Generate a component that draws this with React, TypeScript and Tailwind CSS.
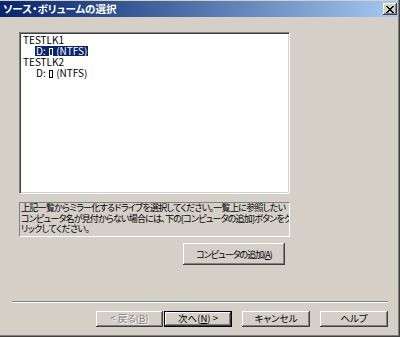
import React from "react";

const font = "font-['Noto_Sans_CJK_JP','Noto_Sans_CJK_SC',sans-serif] [font-feature-settings:'palt']";

function Btn({
  children,
  className = "",
  variant = "normal",
}: {
  children: React.ReactNode;
  className?: string;
  variant?: "normal" | "default" | "disabled";
}) {
  const frame =
    variant === "default"
      ? "border border-black shadow-[inset_-1px_-1px_#404040,inset_1px_1px_#ffffff,inset_-2px_-2px_#808080]"
      : "shadow-[inset_-1px_-1px_#404040,inset_1px_1px_#ffffff,inset_-2px_-2px_#808080,inset_2px_2px_#d4d0c8]";
  const text = variant === "disabled" ? "text-[#808080] [text-shadow:1px_1px_#ffffff]" : "text-black";
  return (
    <div className={`flex shrink-0 items-center justify-center bg-[#d4d0c8] leading-none ${frame} ${text} ${className}`}>
      {children}
    </div>
  );
}

function Tofu() {
  return <span className="mx-[1px] inline-block h-[8px] w-[4px] border border-current align-[-1px]" />;
}

export default function App() {
  return (
    <div
      className={`relative flex h-[337px] w-[400px] flex-col overflow-hidden border-r border-b border-r-[#404040] border-b-[#404040] bg-[#d4d0c8] pt-px shadow-[inset_-1px_-1px_#808080] ${font}`}
    >
      {/* Title bar */}
      <div className="mr-px flex h-[16px] shrink-0 items-center justify-between bg-linear-to-r from-[#0a246a] to-[#a6caf0] pl-[3px] pr-px">
        <span className="text-[10.5px] leading-none font-bold text-white">ソース・ボリュームの選択</span>
        <div className="flex h-[12px] w-[14px] items-center justify-center bg-[#d4d0c8] shadow-[inset_-1px_-1px_#404040,inset_1px_1px_#ffffff,inset_-2px_-2px_#808080]">
          <svg width="8" height="7" viewBox="0 0 8 7" shapeRendering="crispEdges">
            <path d="M0 0h2v1h-2zM6 0h2v1h-2zM1 1h2v1h-2zM5 1h2v1h-2zM2 2h4v1h-4zM3 3h2v1h-2zM2 4h4v1h-4zM1 5h2v1h-2zM5 5h2v1h-2zM0 6h2v1h-2zM6 6h2v1h-2z" fill="#000" />
          </svg>
        </div>
      </div>

      {/* Volume list */}
      <div className="mt-[15px] ml-[19px] h-[162px] w-[271px] shrink-0 border border-t-[#808080] border-r-white border-b-white border-l-[#808080] bg-white pt-px pl-[3px] text-[10px] leading-[11px] text-black shadow-[inset_1px_1px_#404040,inset_-1px_-1px_#d4d0c8]">
        <div className="h-[11px]">TESTLK1</div>
        <div className="h-[11px] pl-[12px]">
          <span className="inline-block h-[10px] bg-[#0a246a] px-[1px] leading-[10px] text-white">
            D: <Tofu /> (NTFS)
          </span>
        </div>
        <div className="h-[11px]">TESTLK2</div>
        <div className="h-[11px] pl-[13px]">
          D: <Tofu /> (NTFS)
        </div>
      </div>

      {/* Description */}
      <div className="mt-[8px] ml-[19px] flex h-[35px] w-[271px] shrink-0 flex-col overflow-hidden border border-t-[#808080] border-r-white border-b-white border-l-[#808080] px-px text-[9px] leading-[10.5px] whitespace-nowrap text-black">
        <span className="tracking-[-0.7px]">上記一覧からミラー化するドライブを選択してください。一覧上に参照したい</span>
        <span className="tracking-[-0.8px]">コンピュータ名が見付からない場合には、下の[コンピュータの追加]ボタンをク</span>
        <span className="tracking-[-0.6px]">リックしてください。</span>
      </div>

      {/* Add computer */}
      <div className="mt-[6px] ml-[183px] flex">
        <Btn className="h-[22px] w-[102px] text-[9px] tracking-[-1px]">
          コンピュータの追加(<u>A</u>)
        </Btn>
      </div>

      {/* Separator */}
      <div className="mt-[36px] ml-[12px] h-[2px] w-[376px] shrink-0 border-t border-b border-t-[#808080] border-b-white" />

      {/* Wizard buttons */}
      <div className="mt-[8px] ml-[96px] flex h-[16px] text-[9.5px]">
        <Btn variant="disabled" className="w-[67px]">
          &lt; 戻る(<u>B</u>)
        </Btn>
        <Btn variant="default" className="ml-px w-[68px]">
          次へ(<u>N</u>) &gt;
        </Btn>
        <Btn className="ml-[10px] w-[68px]">キャンセル</Btn>
        <Btn className="ml-[10px] w-[68px]">ヘルプ</Btn>
      </div>
    </div>
  );
}
